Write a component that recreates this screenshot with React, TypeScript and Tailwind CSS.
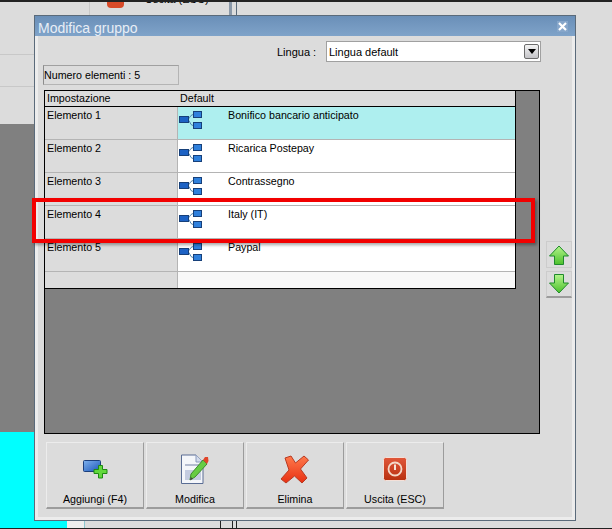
const uiFont = { fontFamily: '"Liberation Sans", Arial, sans-serif' };

const rows = [
  { name: 'Elemento 1', value: 'Bonifico bancario anticipato', selected: true },
  { name: 'Elemento 2', value: 'Ricarica Postepay' },
  { name: 'Elemento 3', value: 'Contrassegno' },
  { name: 'Elemento 4', value: 'Italy (IT)' },
  { name: 'Elemento 5', value: 'Paypal' },
];

function TreeIcon() {
  return (
    <svg width="23" height="18" viewBox="0 0 23 18" className="block">
      <path d="M9 8.500 Q11 6 12 4.500 L14 3.500 M9 8.500 Q11 11 12 13.500 L14 14.500" fill="none" stroke="#4f86b4" strokeWidth="1" />
      <rect x="0.5" y="5.500" width="9" height="6" fill="#1d62c4" stroke="#17407a" />
      <rect x="14.500" y="0.5" width="8" height="6" fill="#2f80dc" stroke="#17407a" />
      <rect x="14.500" y="11.500" width="8" height="6" fill="#2f80dc" stroke="#17407a" />
    </svg>
  );
}

function AddIcon() {
  return (
    <svg width="25" height="19" viewBox="0 0 25 19">
      <defs>
        <linearGradient id="addBlue" x1="0" y1="0" x2="1" y2="1">
          <stop offset="0" stopColor="#7fb2ee" />
          <stop offset="1" stopColor="#1b55b8" />
        </linearGradient>
      </defs>
      <rect x="0.5" y="0.5" width="17" height="11" rx="1" fill="url(#addBlue)" stroke="#1c3f7c" />
      <path d="M15.5 5.500h4v4h4.500v4h-4.500v4.500h-4v-4.500H11v-4h4.500z" fill="#62d83c" stroke="#1f8a12" />
    </svg>
  );
}

function EditIcon() {
  return (
    <svg width="28" height="31" viewBox="0 0 28 31">
      <path d="M0.5 1 H15 L22 8 V29.500 H0.5 Z" fill="#f4f6fa" stroke="#5a6d94" />
      <path d="M15 1 V8 H22" fill="#d4dcec" stroke="#8a9abc" />
      <rect x="4" y="10" width="14" height="2" fill="#b4bcd0" />
      <rect x="4" y="16" width="16" height="10" fill="#c4cce0" />
      <path d="M9 26 L10 20 L22 6 L26 10 L14 23 Z" fill="#66cc44" stroke="#3c8c2c" />
      <path d="M22 6 L24 3 L27 3 L27.500 7 L26 10 Z" fill="#e0452a" />
      <path d="M9 26 L10 23 L12 25 Z" fill="#444" />
    </svg>
  );
}

function DeleteIcon() {
  return (
    <svg width="30" height="29" viewBox="0 0 30 29">
      <defs>
        <linearGradient id="delRed" x1="0" y1="0" x2="0" y2="1">
          <stop offset="0" stopColor="#ff7a4c" />
          <stop offset="1" stopColor="#e83012" />
        </linearGradient>
      </defs>
      <path d="M5 3 L11 1 L15.500 8 L24 1 L28.500 5 L20.500 14 L27 23 L22 28 L14.500 21 L6 28 L1 24 L9 15 Z" fill="url(#delRed)" stroke="#b83a22" strokeLinejoin="round" />
    </svg>
  );
}

function ExitIcon() {
  return (
    <svg width="24" height="24" viewBox="0 0 24 24">
      <defs>
        <linearGradient id="exitRed" x1="0" y1="0" x2="0" y2="1">
          <stop offset="0" stopColor="#e0573a" />
          <stop offset="1" stopColor="#b8300f" />
        </linearGradient>
      </defs>
      <rect x="0.5" y="0.5" width="23" height="23" rx="2" fill="url(#exitRed)" stroke="#f4e0d8" />
      <circle cx="12" cy="12" r="6.500" fill="none" stroke="#f4d8c8" strokeWidth="1.800" />
      <rect x="11" y="7.500" width="2" height="5.500" fill="#f4e4d8" />
    </svg>
  );
}

function ArrowIcon({ down }: { down?: boolean }) {
  return (
    <svg width="20" height="20" viewBox="0 0 20 20" className={down ? 'rotate-180' : ''}>
      <defs>
        <linearGradient id={down ? 'arrowDown' : 'arrowUp'} x1="0" y1="0" x2="0" y2="1">
          <stop offset="0" stopColor={down ? '#4cc02c' : '#b4f58c'} />
          <stop offset="1" stopColor={down ? '#b4f58c' : '#4cc02c'} />
        </linearGradient>
      </defs>
      <path d="M10 1 L19.500 11 H14.500 V19.500 H5.500 V11 H0.500 Z" fill={`url(#${down ? 'arrowDown' : 'arrowUp'})`} stroke="#1f8a2c" />
    </svg>
  );
}

function ToolButton({ label, children }: { label: string; children: React.ReactNode }) {
  return (
    <button className="flex h-[67px] w-[98px] flex-col items-center border border-[#ececec] border-r-[#9c9c9c] border-b-2 border-b-[#9c9c9c] bg-[#dcdcdc] text-[10.7px] leading-none text-black">
      <span className="flex h-[48px] items-center pt-[4px]">{children}</span>
      <span className="mt-[3px]">{label}</span>
    </button>
  );
}

export default function App() {
  return (
    <div style={uiFont} className="relative h-[529px] w-[612px] overflow-hidden bg-[#dcdcdc] text-[10.7px] text-black">
      {/* app window behind the dialog */}
      <div className="absolute left-[145px] top-[-8px] text-[11px] leading-[14px]">Uscita (ESC)</div>
      <div className="absolute left-0 top-0 h-[2px] w-full bg-[#222222]" />
      <div className="absolute bottom-0 left-0 h-px w-full bg-[#222222]" />
      <div className="absolute left-0 top-[54px] h-px w-[34px] bg-[#c8c8c8]" />
      <div className="absolute left-0 top-[86px] h-px w-[34px] bg-[#c8c8c8]" />
      <div className="absolute left-[89px] top-[2px] h-[13px] w-px bg-[#c8c8c8]" />
      <div className="absolute left-[107px] top-[2px] h-[6px] w-[17px] rounded-b-sm bg-[#d84a28]" />
      <div className="absolute left-[229px] top-[2px] h-[13px] w-[3px] bg-[#8a98a8]" />
      <div className="absolute left-[236px] top-[2px] h-[13px] w-px bg-[#5a6a7a]" />
      <div className="absolute left-0 top-[124px] h-[308px] w-[34px] bg-[#808080]" />
      <div className="absolute left-0 top-[432px] h-[96px] w-[67px] bg-[#00ffff]" />
      <div className="absolute left-[67px] top-[520px] h-[8px] w-[17px] bg-[#eeeeee]" />
      <div className="absolute left-[84px] top-[520px] h-[8px] w-px bg-[#8cc8d0]" />
      <div className="absolute left-[220px] top-[521px] h-[7px] w-px bg-[#222222]" />
      <div className="absolute left-[232px] top-[521px] h-[7px] w-px bg-[#222222]" />
      <div className="absolute left-[236px] top-[521px] h-[7px] w-px bg-[#222222]" />

      {/* dialog */}
      <div className="absolute left-[34px] top-[15px] flex h-[506px] w-[542px] flex-col border border-[#5a6a7a] bg-[#dcdcdc]">
        <div className="flex h-[20px] shrink-0 items-center justify-between bg-gradient-to-b from-[#6a8fb8] to-[#7fa3c9] pl-[3px] pr-[7px] text-[#e8eef6]">
          <span className="pt-[4px] text-[14px] leading-none">Modifica gruppo</span>
          <span className="flex h-[11px] w-[11px] items-center justify-center bg-[#86a6ca]">
            <svg width="9" height="9" viewBox="0 0 9 9">
              <path d="M1 1 L8 8 M8 1 L1 8" stroke="#ffffff" strokeWidth="2.200" />
            </svg>
          </span>
        </div>

        <div className="flex min-h-0 flex-1 flex-col border-[3px] border-t-0 border-[#ececec]">
          <div className="ml-[239px] mt-[5px] flex h-[21px] items-center text-[11px]">
            <span className="w-[49px] pt-[1px]">Lingua :</span>
            <div className="flex h-[21px] w-[215px] items-center justify-between border border-[#a0a0a0] bg-white pl-[2px] pr-[1px]">
              <span className="pt-[1px]">Lingua default</span>
              <span className="flex h-[15px] w-[15px] items-center justify-center rounded-[2px] border border-[#6c6c6c] bg-gradient-to-b from-[#f4f4f4] to-[#c4c4c8]">
                <span className="h-0 w-0 border-x-[4px] border-t-[5px] border-x-transparent border-t-black" />
              </span>
            </div>
          </div>

          <div className="ml-[5px] mt-[3px] flex h-[20px] w-[136px] items-center border border-[#b4b4b4] border-l-[#8c8c8c] border-t-[#a0a0a0] leading-none">
            Numero elementi : 5
          </div>

          <div className="mt-[5px] flex">
            <div className="ml-[6px] h-[344px] w-[497px] border border-black bg-[#808080]">
              <div className="w-[471px] border-r border-b border-black bg-[#dcdcdc]">
                <div className="flex h-[16px] items-center border-b border-black leading-none">
                  <span className="w-[133px] pl-[2px]">Impostazione</span>
                  <span className="pl-[2px]">Default</span>
                </div>
                {rows.map((row) => (
                  <div key={row.name} className="flex h-[33px] border-b border-[#b4b4b4]">
                    <div className="w-[133px] border-r border-[#b4b4b4] pl-[2px] pt-[1px] leading-[14px]">{row.name}</div>
                    <div className={`flex flex-1 ${row.selected ? 'bg-[#aeefef]' : 'bg-white'}`}>
                      <div className="ml-px w-[49px] pt-[4px]">
                        <TreeIcon />
                      </div>
                      <span className="pt-[1px] leading-[14px]">{row.value}</span>
                    </div>
                  </div>
                ))}
                <div className="flex h-[16px]">
                  <div className="w-[133px] border-r border-[#b4b4b4]" />
                  <div className="flex-1 bg-[#f8f8f8]" />
                </div>
              </div>
            </div>

            <div className="ml-[6px] flex flex-col gap-[3px] pt-[151px]">
              <div className="flex h-[27px] w-[26px] items-center justify-center border border-[#cccccc] bg-[#dcdcdc]">
                <ArrowIcon />
              </div>
              <div className="flex h-[27px] w-[26px] items-center justify-center border border-[#cccccc] border-b-2 border-b-[#9c9c9c] bg-[#dcdcdc]">
                <ArrowIcon down />
              </div>
            </div>
          </div>

          <div className="ml-[8px] mt-[8px] flex gap-[2px]">
            <ToolButton label="Aggiungi (F4)"><AddIcon /></ToolButton>
            <ToolButton label="Modifica"><EditIcon /></ToolButton>
            <ToolButton label="Elimina"><DeleteIcon /></ToolButton>
            <ToolButton label="Uscita (ESC)"><ExitIcon /></ToolButton>
          </div>
        </div>
      </div>

      {/* red highlight drawn over the list */}
      <div className="absolute left-[32px] top-[198px] h-[45px] w-[503px] border-4 border-[#f20000] shadow-[2px_2px_3px_rgba(0,0,0,0.35)]" />
    </div>
  );
}
